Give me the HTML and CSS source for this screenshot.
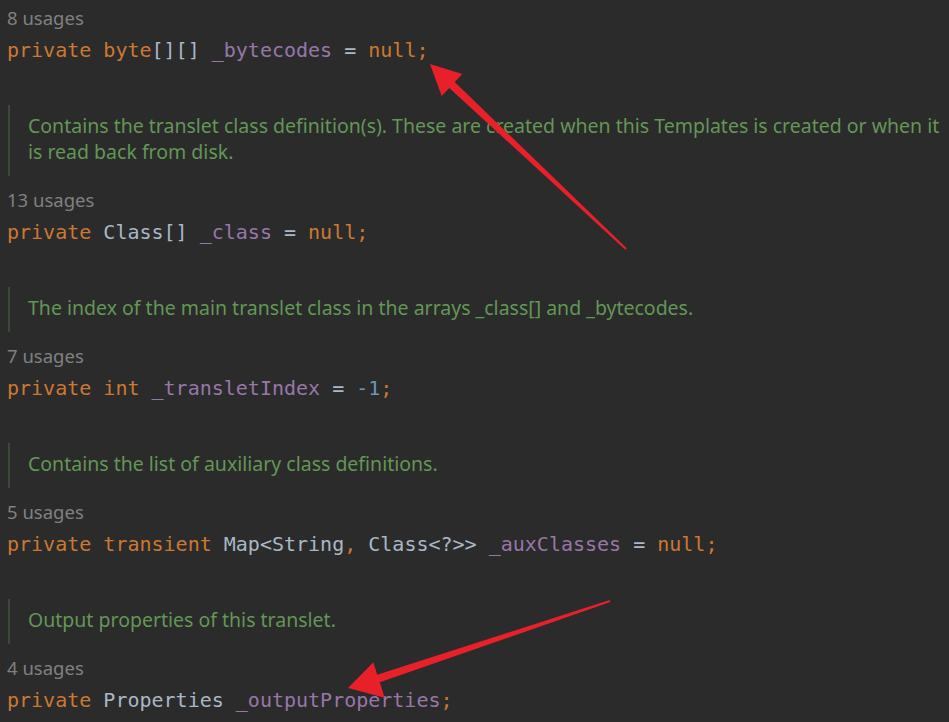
FILE: index.html
```html
<!DOCTYPE html>
<html lang="en">
<head>
<meta charset="utf-8">
<title>Templates fields</title>
<link rel="stylesheet" href="styles.css">
</head>
<body>
<main class="editor">
  <section class="field">
    <div class="usages">8 usages</div>
    <div class="code"><span class="kw">private</span> <span class="kw">byte</span>[][] <span class="fld">_bytecodes</span> = <span class="kw">null;</span></div>
  </section>
  <section class="field">
    <div class="doc">Contains the translet class definition(s). These are created when this Templates is created or when it<br>is read back from disk.</div>
    <div class="usages">13 usages</div>
    <div class="code"><span class="kw">private</span> Class[] <span class="fld">_class</span> = <span class="kw">null;</span></div>
  </section>
  <section class="field">
    <div class="doc">The index of the main translet class in the arrays _class[] and _bytecodes.</div>
    <div class="usages">7 usages</div>
    <div class="code"><span class="kw">private</span> <span class="kw">int</span> <span class="fld">_transletIndex</span> = <span class="num">-1</span><span class="kw">;</span></div>
  </section>
  <section class="field">
    <div class="doc">Contains the list of auxiliary class definitions.</div>
    <div class="usages">5 usages</div>
    <div class="code"><span class="kw">private</span> <span class="kw">transient</span> Map&lt;String<span class="kw">,</span> Class&lt;?&gt;&gt; <span class="fld">_auxClasses</span> = <span class="kw">null;</span></div>
  </section>
  <section class="field">
    <div class="doc">Output properties of this translet.</div>
    <div class="usages">4 usages</div>
    <div class="code"><span class="kw">private</span> Properties <span class="fld">_outputProperties</span><span class="kw">;</span></div>
  </section>
</main>
<svg class="arrows" width="949" height="722" viewBox="0 0 949 722" aria-hidden="true">
  <polygon points="430,64 462.3,74.1 454.7,82.1 626.7,248.3 625.3,249.7 449.3,87.9 441.7,95.9"/>
  <polygon points="348,688 373.4,662.3 377.2,674.7 609.7,600 610.3,602 379.8,682.3 384.6,697.7"/>
</svg>
</body>
</html>
```
FILE: styles.css
```css
html, body {
  margin: 0;
  padding: 0;
  background: #2b2b2b;
  overflow: hidden;
}
body {
  width: 949px;
  height: 722px;
  position: relative;
}
.editor {
  padding: 6px 0 0 7px;
}
.usages {
  height: 24px;
  line-height: 24px;
  font-family: "Noto Sans", "Open Sans", sans-serif;
  font-size: 18.5px;
  color: #808080;
}
.code {
  height: 40px;
  line-height: 40px;
  font-family: "DejaVu Sans Mono", "Liberation Mono", monospace;
  font-size: 20px;
  color: #a9b7c6;
  white-space: pre;
}
.kw { color: #cc7832; }
.fld { color: #9876aa; }
.num { color: #6897bb; }
.doc {
  margin: 35px 0 12px 1px;
  padding: 8px 0 11px 18px;
  border-left: 2px solid #3b4a38;
  line-height: 26px;
  font-family: "Noto Sans", "Open Sans", sans-serif;
  font-size: 19.5px;
  color: #629755;
  white-space: nowrap;
}
.arrows {
  position: absolute;
  left: 0;
  top: 0;
  pointer-events: none;
}
.arrows polygon {
  fill: #e8202a;
}
```
